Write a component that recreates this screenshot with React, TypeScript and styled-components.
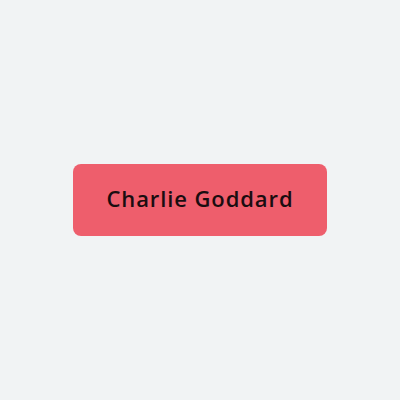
import React from 'react';
import styled, { createGlobalStyle } from 'styled-components';

const GlobalStyle = createGlobalStyle`
  html, body {
    margin: 0;
    padding: 0;
    background: #f1f3f4;
  }
`;

const Page = styled.div`
  width: 400px;
  height: 400px;
  display: flex;
  align-items: center;
  justify-content: center;
  background: #f1f3f4;
`;

const NameButton = styled.button`
  width: 254px;
  height: 72px;
  padding: 0 0 4px;
  border: none;
  border-radius: 8px;
  background: #ee5e6c;
  color: #1a0d10;
  font-family: 'Open Sans', sans-serif;
  font-size: 22px;
  font-weight: 600;
  letter-spacing: 0.9px;
  cursor: pointer;
`;

const App = (): JSX.Element => (
  <>
    <GlobalStyle />
    <Page>
      <NameButton>Charlie Goddard</NameButton>
    </Page>
  </>
);

export default App;
